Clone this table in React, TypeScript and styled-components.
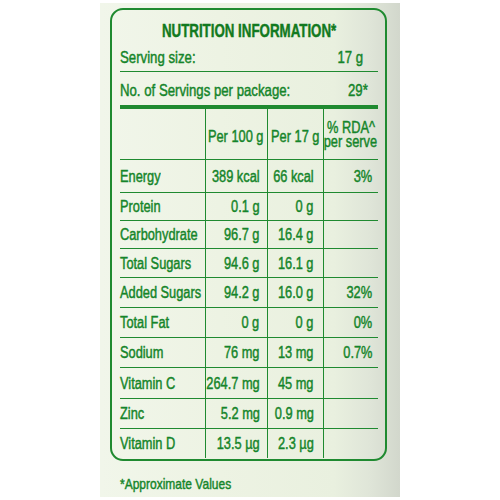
import styled, { createGlobalStyle } from "styled-components";

const GREEN = "#15852a";
const LINE = "#1f8a30";

type Row = { name: string; per100: string; perServe: string; rda?: string };

const rows: Row[] = [
  { name: "Energy", per100: "389 kcal", perServe: "66 kcal", rda: "3%" },
  { name: "Protein", per100: "0.1 g", perServe: "0 g" },
  { name: "Carbohydrate", per100: "96.7 g", perServe: "16.4 g" },
  { name: "Total Sugars", per100: "94.6 g", perServe: "16.1 g" },
  { name: "Added Sugars", per100: "94.2 g", perServe: "16.0 g", rda: "32%" },
  { name: "Total Fat", per100: "0 g", perServe: "0 g", rda: "0%" },
  { name: "Sodium", per100: "76 mg", perServe: "13 mg", rda: "0.7%" },
  { name: "Vitamin C", per100: "264.7 mg", perServe: "45 mg" },
  { name: "Zinc", per100: "5.2 mg", perServe: "0.9 mg" },
  { name: "Vitamin D", per100: "13.5 µg", perServe: "2.3 µg" },
];

export default function App() {
  return (
    <>
      <GlobalStyle />
      <styles.page>
        <styles.panel>
          <styles.box>
            <styles.title>
              <styles.text $origin="center" $scale={0.72}>
                NUTRITION INFORMATION*
              </styles.text>
            </styles.title>
            <styles.infoRow>
              <styles.text $origin="left">Serving size:</styles.text>
              <styles.infoValue $pad={15}>
                <styles.text $origin="right">17 g</styles.text>
              </styles.infoValue>
            </styles.infoRow>
            <styles.infoRow $last>
              <styles.text $origin="left">No. of Servings per package:</styles.text>
              <styles.infoValue $pad={10}>
                <styles.text $origin="right">29*</styles.text>
              </styles.infoValue>
            </styles.infoRow>
            <styles.grid>
              <styles.head $first />
              <styles.head>
                <styles.text $origin="center">Per 100 g</styles.text>
              </styles.head>
              <styles.head>
                <styles.text $origin="center">Per 17 g</styles.text>
              </styles.head>
              <styles.head $stacked>
                <styles.text $origin="center">% RDA^</styles.text>
                <styles.text $origin="center">per serve</styles.text>
              </styles.head>
              {rows.map((r) => (
                <styles.row key={r.name}>
                  <styles.label>
                    <styles.text $origin="left">{r.name}</styles.text>
                  </styles.label>
                  <styles.value $pad={7}>
                    <styles.text $origin="right">{r.per100}</styles.text>
                  </styles.value>
                  <styles.value $pad={9}>
                    <styles.text $origin="right">{r.perServe}</styles.text>
                  </styles.value>
                  <styles.value $pad={5}>
                    {r.rda && <styles.text $origin="right">{r.rda}</styles.text>}
                  </styles.value>
                </styles.row>
              ))}
            </styles.grid>
          </styles.box>
          <styles.note>
            <styles.text $origin="left">*Approximate Values</styles.text>
          </styles.note>
        </styles.panel>
      </styles.page>
    </>
  );
}

const GlobalStyle = createGlobalStyle`
  body {
    margin: 0;
    background: #ffffff;
  }
`;

const styles = {
  page: styled.div`
    width: 500px;
    height: 500px;
    display: flex;
    justify-content: center;
    padding-top: 3px;
    box-sizing: border-box;
    font-family: "Liberation Sans", Arial, sans-serif;
    color: ${GREEN};
  `,
  panel: styled.div`
    width: 300px;
    height: 494px;
    box-sizing: border-box;
    padding: 5px 13px 0 10px;
    display: flex;
    flex-direction: column;
    background: linear-gradient(
      90deg,
      #f1f6ea 0%,
      #edf3e3 40%,
      #e9f0df 78%,
      #dfe5d8 90%,
      #d2d7cc 100%
    );
  `,
  // the package type is a narrow, fairly heavy grotesque
  text: styled.span<{ $origin: "left" | "right" | "center"; $scale?: number }>`
    display: inline-block;
    white-space: nowrap;
    transform: scaleX(${(p) => p.$scale ?? 0.8});
    transform-origin: ${(p) => p.$origin} center;
    -webkit-text-stroke: 0.45px currentColor;
  `,
  box: styled.div`
    height: 453px;
    box-sizing: border-box;
    border: 2.5px solid ${LINE};
    border-radius: 13px;
    padding: 0 7px 0 7.5px;
    display: flex;
    flex-direction: column;
    overflow: hidden;
  `,
  title: styled.div`
    display: flex;
    justify-content: center;
    font-weight: bold;
    font-size: 18.5px;
    line-height: 20px;
    color: #127a20;
    padding: 11px 0 4px;
  `,
  infoRow: styled.div<{ $last?: boolean }>`
    display: flex;
    justify-content: space-between;
    font-size: 16.5px;
    line-height: 20px;
    padding: ${(p) => (p.$last ? "8px 0 5px" : "2px 0 4px")};
    border-bottom: ${(p) => (p.$last ? `4px solid ${LINE}` : `1.5px solid ${LINE}`)};
  `,
  infoValue: styled.span<{ $pad: number }>`
    display: flex;
    justify-content: flex-end;
    padding-right: ${(p) => p.$pad}px;
  `,
  grid: styled.div`
    display: grid;
    grid-template-columns: 85px 62px 56px 55px;
    grid-template-rows: 50px 33px 28px 28px 29px 30px 30px 30px 31px 30px 30px;
    font-size: 16px;
    line-height: 18px;
  `,
  row: styled.div`
    display: contents;
  `,
  head: styled.div<{ $first?: boolean; $stacked?: boolean }>`
    display: flex;
    flex-direction: column;
    align-items: center;
    justify-content: center;
    padding-top: ${(p) => (p.$stacked ? "2px" : "6px")};
    line-height: ${(p) => (p.$stacked ? "14.5px" : "18px")};
    border-left: ${(p) => (p.$first ? "none" : `1.5px solid ${LINE}`)};
    box-sizing: border-box;
  `,
  label: styled.div`
    display: flex;
    align-items: center;
    padding-top: 1px;
    border-top: 1.5px solid ${LINE};
    box-sizing: border-box;
  `,
  value: styled.div<{ $pad: number }>`
    display: flex;
    align-items: center;
    justify-content: flex-end;
    padding: 1px ${(p) => p.$pad}px 0 0;
    border-top: 1.5px solid ${LINE};
    border-left: 1.5px solid ${LINE};
    box-sizing: border-box;
    min-width: 0;
  `,
  note: styled.div`
    font-size: 15px;
    line-height: 18px;
    padding: 14px 0 0 10px;
  `,
} as const;
